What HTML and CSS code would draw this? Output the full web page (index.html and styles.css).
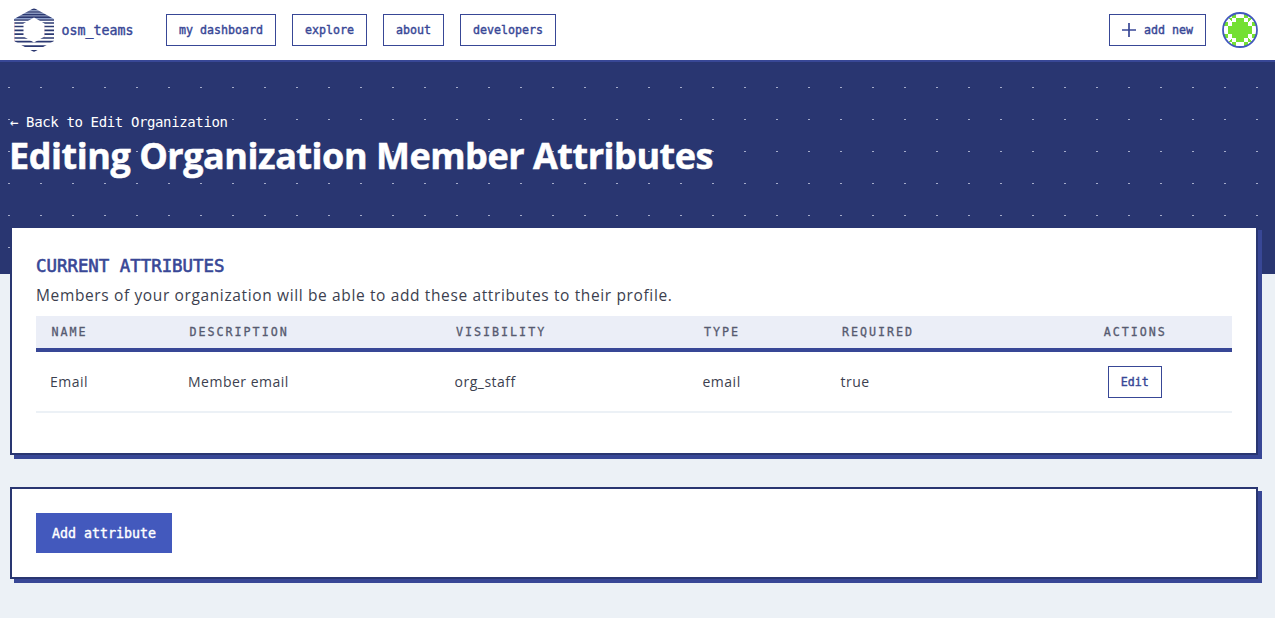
FILE: index.html
```html
<!DOCTYPE html>
<html lang="en">
<head>
<meta charset="utf-8">
<title>osm_teams</title>
<link rel="stylesheet" href="styles.css">
</head>
<body>
<header class="topbar">
  <a class="brand">
    <svg class="logo" width="42" height="44" viewBox="0 0 42 44">
      <defs>
        <clipPath id="ring"><path clip-rule="evenodd" d="M21 0 41 11V33L21 44 1 33V11ZM21 9.500 10.500 15.500V28.500L21 34.500 31.500 28.500V15.500Z"/></clipPath>
      </defs>
      <g clip-path="url(#ring)">
        <path class="logo-shade" d="M0 2.800H42M0 5.300H42M0 7.900H42M0 10.500H42"/>
        <path class="logo-red" d="M1 14V35M31 17V30M8 38H10M19 43H20"/>
        <path class="logo-lines" d="M0 1.400H42M0 4H42M0 6.600H42M0 9.200H42M0 12H42M1.500 15H41M1.500 18.500H41M1.500 22.300H41M1.500 26.200H41M1.500 30H41M1.500 33.700H41M1.500 38.200H41M0 42.800H41"/>
      </g>
    </svg>
    <span class="mono brand-name">osm_teams</span>
  </a>
  <nav class="nav">
    <a class="btn mono">my dashboard</a>
    <a class="btn mono">explore</a>
    <a class="btn mono">about</a>
    <a class="btn mono">developers</a>
  </nav>
  <div class="account">
    <a class="btn mono"><svg class="plus" width="14" height="14" viewBox="0 0 14 14"><path d="M7 0V14M0 7H14"/></svg>add new</a>
    <svg class="avatar" width="36" height="36" viewBox="0 0 36 36">
      <defs><clipPath id="disc"><circle cx="18" cy="18" r="17"/></clipPath></defs>
      <circle cx="18" cy="18" r="17" fill="#fff"/>
      <g clip-path="url(#disc)" fill="#74e031" shape-rendering="crispEdges">
        <path d="M10 6h16v4h4v16h-4v4h-16v-4h-4v-16h4z"/>
        <path d="M10 2h4v4h-4zM22 2h4v4h-4zM10 30h4v4h-4zM22 30h4v4h-4zM2 10h4v4h-4zM2 22h4v4h-4zM30 10h4v4h-4zM30 22h4v4h-4z"/>
        <path d="M6 6h4v4zM30 6h-4v4zM6 30h4v-4zM30 30h-4v-4z"/>
        <path fill="#fff" d="M10 6h4v4h-4zM22 6h4v4h-4zM10 26h4v4h-4zM22 26h4v4h-4zM6 10h4v4h-4zM6 22h4v4h-4zM26 10h4v4h-4zM26 22h4v4h-4z"/>
      </g>
      <circle class="avatar-ring" cx="18" cy="18" r="17"/>
    </svg>
  </div>
</header>
<section class="hero">
  <a class="mono back">← Back to Edit Organization</a>
  <h1 class="title">Editing Organization Member Attributes</h1>
</section>
<main class="content">
  <section class="card">
    <h2 class="mono heading">CURRENT ATTRIBUTES</h2>
    <p class="lead">Members of your organization will be able to add these attributes to their profile.</p>
    <div class="row row-head mono">
      <span>NAME</span><span>DESCRIPTION</span><span>VISIBILITY</span><span>TYPE</span><span>REQUIRED</span><span class="actions">ACTIONS</span>
    </div>
    <div class="row row-body">
      <span>Email</span><span>Member email</span><span>org_staff</span><span>email</span><span>true</span><span class="actions"><a class="btn mono">Edit</a></span>
    </div>
  </section>
  <section class="card card-add">
    <button class="mono primary">Add attribute</button>
  </section>
</main>
</body>
</html>
```

FILE: styles.css
```css
* { box-sizing: border-box; }
body {
  margin: 0;
  height: 618px;
  overflow: hidden;
  background: #ecf1f6;
  color: #3c3f4f;
  font-family: "Open Sans", sans-serif;
}
.mono { font-family: "DejaVu Sans Mono", monospace; }
.topbar {
  display: flex;
  align-items: center;
  height: 62px;
  padding: 0 17px 0 13px;
  background: #fff;
  border-bottom: 2px solid #384796;
}
.brand { display: flex; align-items: center; gap: 6.500px; color: #384796; }
.brand-name { font-size: 13.300px; -webkit-text-stroke: .4px; }
.logo path { fill: none; }
.logo .logo-lines { stroke: #2b3871; stroke-width: 1.700; }
.logo .logo-shade { stroke: #8fa3cf; stroke-width: 1; }
.logo .logo-red { stroke: #f3a9b0; stroke-width: 1; }
.nav { display: flex; gap: 16px; margin-left: 32.500px; }
.btn {
  display: inline-flex;
  align-items: center;
  height: 32px;
  padding: 0 12px;
  border: 1px solid #384796;
  background: #fff;
  color: #384796;
  font-size: 11.630px;
  -webkit-text-stroke: .4px;
}
.account { display: flex; align-items: center; gap: 16px; margin-left: auto; }
.plus { margin-right: 8px; fill: none; stroke: #384796; stroke-width: 1.700; }
.avatar-ring { fill: none; stroke: #4359bd; stroke-width: 1.800; }
.hero {
  height: 212px;
  padding: 50px 10px 0 9px;
  background-color: #293671;
  background-image: conic-gradient(from 90deg at 30px 31px, #a5acca 25%, transparent 0);
  background-size: 32px 32px;
  background-position: 10px -6px;
}
.back { display: block; padding-left: 1px; font-size: 14px; line-height: 20px; letter-spacing: -.370px; color: #fff; }
.title { margin: 0; font-size: 36px; line-height: 48px; font-weight: 700; letter-spacing: -.470px; color: #fff; -webkit-text-stroke: .5px; white-space: nowrap; }
.content { display: flex; flex-direction: column; gap: 32px; margin-top: -48px; padding: 0 17px 0 10px; }
.card {
  height: 229px;
  padding: 24px;
  border: 2px solid #293671;
  background: #fff;
  box-shadow: 4px 4px 0 #384796;
}
.card-add { height: 92px; }
.heading { margin: 4px 0 0; font-size: 17.400px; line-height: 20px; font-weight: 400; color: #384796; -webkit-text-stroke: .6px; }
.lead { margin: 7px 0 0; font-size: 15.500px; line-height: 24px; letter-spacing: .630px; white-space: nowrap; }
.row { display: grid; grid-template-columns: 138px 266.500px 248px 138px 208px 1fr; align-items: center; }
.row span { padding-left: 14px; }
.row .actions { padding: 0 0 0 3px; text-align: center; }
.row-head { height: 36px; margin-top: 9px; background: #ebeef7; border-bottom: 4px solid #384796; font-size: 11.700px; letter-spacing: 1.980px; color: #565a70; -webkit-text-stroke: .3px; }
.row-head span { padding-left: 15.500px; }
.row-head .actions { padding-left: 4px; }
.row-body { height: 61px; border-bottom: 2px solid #ecf1f6; font-size: 14px; letter-spacing: .500px; }
.row-body .btn { letter-spacing: 0; }
.primary { display: block; height: 40px; width: 136px; padding: 0; border: 0; background: #4359bd; color: #fff; font-size: 13.300px; -webkit-text-stroke: .4px; }
```
